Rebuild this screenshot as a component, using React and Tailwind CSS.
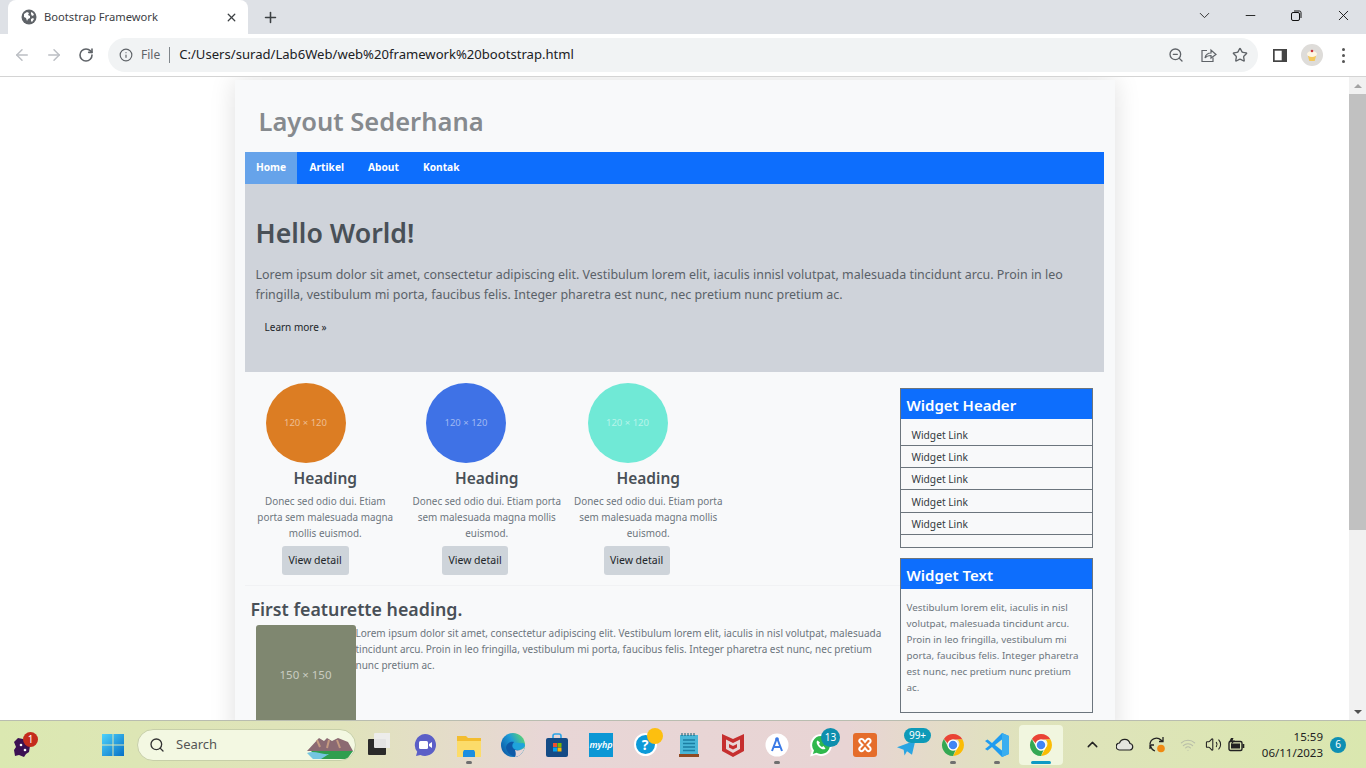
import React from "react";
import { ArrowLeft, ArrowRight, RotateCw, Info, ZoomOut, Star, ChevronDown, Minus, X, Plus, Search, ChevronUp, Volume2, Wifi } from "lucide-react";

const ChromeLogo = ({ size = 24 }) => (
  <svg width={size} height={size} viewBox="0 0 48 48">
    <path d="M24 2a22 22 0 0 1 19 11H24a11 11 0 0 0-10.500 7.500L5.800 11.800A22 22 0 0 1 24 2z" fill="#ea4335" />
    <path d="M43 13a22 22 0 0 1-19 33l9.500-16.500A11 11 0 0 0 33 13z" fill="#fbbc04" />
    <path d="M5.800 11.800 15 29.500A11 11 0 0 0 29 34l-5 12A22 22 0 0 1 5.800 11.800z" fill="#34a853" />
    <circle cx="24" cy="24" r="11" fill="#fff" />
    <circle cx="24" cy="24" r="8.500" fill="#4285f4" />
  </svg>
);

const Slot = ({ children, dot, active }) => (
  <div className={`relative flex h-[40px] w-[44px] shrink-0 items-center justify-center rounded ${active ? "bg-[#f1f6df]" : ""}`}>
    {children}
    {dot && <span className="absolute bottom-[1px] left-[19px] h-[3px] w-[6px] rounded-full bg-[#6f6f6f]" />}
    {active && <span className="absolute bottom-[1px] left-[12px] h-[3px] w-[20px] rounded-full bg-[#0e9ac4]" />}
  </div>
);

const Badge = ({ children, className }) => (
  <span className={`absolute flex items-center justify-center rounded-full text-[10px] text-white ${className}`}>{children}</span>
);

const Circle = ({ color, textColor, ml, btn, label }) => (
  <div className="w-[161.5px] shrink-0 text-center">
    <div className={`flex h-[80px] w-[80px] items-center justify-center rounded-full ${color} ${ml}`}>
      <span className={`text-[9.5px] ${textColor}`}>120 × 120</span>
    </div>
    <h2 className="mt-[4px] text-[15.5px] leading-[22px] font-semibold text-[#495057]">Heading</h2>
    <p className="mt-[4px] text-[9.9px] leading-[16px] whitespace-nowrap text-[#6c757d]">{label}</p>
    <button className={`mt-[5px] block h-[29px] rounded-[3px] bg-[#ced4da] text-[10.5px] text-[#212529] ${btn}`}>View detail</button>
  </div>
);

const Widget = ({ title, children, className }) => (
  <section className={`w-[193px] border border-[#6c757d] ${className}`}>
    <h3 className="flex h-[30px] items-center bg-[#0d6efd] pr-[5px] pl-[6px] pt-[2px] text-[15px] font-semibold text-white">{title}</h3>
    {children}
  </section>
);

const links = [27, 22, 22, 23, 22];

export default function App() {
  return (
    <div className="flex h-screen w-full flex-col overflow-hidden bg-white font-['Noto_Sans',sans-serif]">
      {/* tab strip */}
      <div className="flex h-[34px] shrink-0 items-end bg-[#dee1e6] pl-[8px]">
        <div className="flex h-[34px] w-[240px] items-center rounded-t-lg bg-white pl-[13px] pr-[10px]">
          <svg width="16" height="16" viewBox="0 0 16 16">
            <circle cx="8" cy="8" r="7.500" fill="#5f6368" />
            <path d="M3 5l3-2 2 1-1 2 2 1v2l-2 1-1 2-1-3-2-1zM10 3l2 1 1 2-2 1-1-2zM10 10l2-1 1 1-2 3-1-1z" fill="#fff" />
          </svg>
          <span className="ml-[7px] flex-1 text-[11.2px] text-[#3c4043]">Bootstrap Framework</span>
          <X size={13} strokeWidth={2.4} className="text-[#3c4043]" />
        </div>
        <div className="flex h-[34px] w-[44px] items-center justify-center">
          <Plus size={17} strokeWidth={2.2} className="text-[#3c4043]" />
        </div>
        <div className="flex-1" />
        <div className="flex h-[30px] items-center self-start pr-[8px]">
          <ChevronDown size={17} strokeWidth={1.4} className="mr-[30px] text-[#333]" />
          <Minus size={15} strokeWidth={1.4} className="mr-[33px] text-[#111]" />
          <svg width="11" height="11" viewBox="0 0 11 11" fill="none" stroke="#111" className="mr-[33px]">
            <rect x="0.500" y="2.500" width="8" height="8" rx="1.500" />
            <path d="M3 1h5.500A1.500 1.500 0 0 1 10 2.500V8" />
          </svg>
          <X size={17} strokeWidth={1.3} className="mr-[6px] text-[#111]" />
        </div>
      </div>
      {/* toolbar */}
      <div className="flex h-[43px] shrink-0 items-center border-b border-[#d4d4d4] bg-white pl-[13px]">
        <ArrowLeft size={18} className="text-[#bcbfc4]" />
        <ArrowRight size={18} className="ml-[14px] text-[#bcbfc4]" />
        <RotateCw size={16} strokeWidth={2.4} className="ml-[15px] text-[#5f6368]" />
        <div className="ml-[14px] flex h-[34px] w-[1150px] items-center rounded-full bg-[#f1f3f4] pl-[11px] pr-[8px]">
          <Info size={14} strokeWidth={2} className="text-[#5f6368]" />
          <span className="ml-[8px] text-[12px] text-[#5f6368]">File</span>
          <span className="ml-[9px] h-[16px] w-px bg-[#80868b]" />
          <span className="ml-[9px] flex-1 text-[13.100px] text-[#202124]">C:/Users/surad/Lab6Web/web%20framework%20bootstrap.html</span>
          <ZoomOut size={16} className="text-[#5f6368]" />
          <svg width="17" height="17" viewBox="0 0 17 17" fill="none" stroke="#5f6368" strokeWidth="1.200" className="ml-[16px]">
            <path d="M7 3.500H2v11h11v-4" />
            <path d="M5 11c.6-3.500 3-5 6-5V3l5 4.500L11 11V8.500c-2.400 0-4.500.6-6 2.500z" />
          </svg>
          <Star size={16} strokeWidth={2} className="ml-[15px] text-[#5f6368]" />
          <span className="w-[2px]" />
        </div>
        <svg width="14" height="13" viewBox="0 0 14 13" className="ml-[15px]">
          <rect width="14" height="13" fill="#444" />
          <rect x="1.700" y="1.700" width="7" height="9.600" fill="#fff" />
        </svg>
        <div className="ml-[14px] flex h-[22px] w-[22px] items-center justify-center rounded-full bg-[#dedcd9]">
          <svg width="14" height="14" viewBox="0 0 14 14">
            <path d="M3 8h8l-1.300 5H4.300z" fill="#f3c75b" />
            <ellipse cx="7" cy="6" rx="5" ry="3" fill="#fff6e3" />
            <circle cx="7" cy="3" r="1.300" fill="#c8323c" />
          </svg>
        </div>
        <div className="ml-[19px] flex flex-col gap-[3px]">
          <span className="h-[3px] w-[3px] rounded-full bg-[#555]" />
          <span className="h-[3px] w-[3px] rounded-full bg-[#555]" />
          <span className="h-[3px] w-[3px] rounded-full bg-[#555]" />
        </div>
      </div>
      {/* viewport */}
      <div className="flex min-h-0 flex-1">
        <main className="min-w-0 flex-1 overflow-hidden">
          <div className="mx-auto mt-[3px] w-[880px] bg-[#f8f9fa] px-[10px] shadow-[0_0_24px_rgba(0,0,0,0.13)]">
            <header className="flex h-[72px] items-center pt-[10px] pl-[14px]">
              <h1 className="text-[25.500px] font-semibold text-[#868a8e]">Layout Sederhana</h1>
            </header>
            <nav className="flex h-[32px] w-[859px] items-center bg-[#0d6efd] text-[10.200px] font-bold text-white">
              <a className="flex h-full w-[52px] items-center justify-center bg-[#66a3ea] pl-[1px]">Home</a>
              <a className="ml-[13px]">Artikel</a>
              <a className="ml-[24px]">About</a>
              <a className="ml-[24px]">Kontak</a>
            </nav>
            <section className="h-[188px] w-[859px] bg-[#cfd3da] px-[11px] pt-[31px]">
              <h2 className="text-[26.700px] leading-[36px] font-semibold text-[#495057]">Hello World!</h2>
              <p className="mt-[14px] text-[12.450px] leading-[20px] whitespace-nowrap text-[#5a6168]">
                Lorem ipsum dolor sit amet, consectetur adipiscing elit. Vestibulum lorem elit, iaculis innisl volutpat, malesuada tincidunt arcu. Proin in leo
                <br />
                fringilla, vestibulum mi porta, faucibus felis. Integer pharetra est nunc, nec pretium nunc pretium ac.
              </p>
              <a className="mt-[15px] ml-[9px] block text-[10px] text-[#212529]">Learn more »</a>
            </section>
            <div className="flex w-[859px]">
              <div className="w-[655px] shrink-0">
                <div className="flex pt-[11px]">
                  <Circle color="bg-[#dc7d23]" textColor="text-[#eebd91]" ml="ml-[21px]" btn="ml-[37px] w-[67px]" label={<>Donec sed odio dui. Etiam<br />porta sem malesuada magna<br />mollis euismod.</>} />
                  <Circle color="bg-[#3f72e6]" textColor="text-[#9fb9f2]" ml="ml-[20px]" btn="ml-[36px] w-[66px]" label={<>Donec sed odio dui. Etiam porta<br />sem malesuada magna mollis<br />euismod.</>} />
                  <Circle color="bg-[#70e9d6]" textColor="text-[#b7f4ea]" ml="ml-[20px]" btn="ml-[36px] w-[66px]" label={<>Donec sed odio dui. Etiam porta<br />sem malesuada magna mollis<br />euismod.</>} />
                </div>
                <hr className="mt-[10px] border-[#f1f2f4]" />
                <h2 className="mt-[11px] ml-[6px] text-[17.800px] leading-[24px] font-semibold text-[#495057]">First featurette heading.</h2>
                <div className="mt-[4px] flex">
                  <div className="ml-[11px] flex h-[100px] w-[100px] shrink-0 items-center justify-center rounded-[3px] bg-[#7f8770]">
                    <span className="text-[11.500px] text-[#c9ccc1]">150 × 150</span>
                  </div>
                  <p className="text-[10px] leading-[16px] whitespace-nowrap text-[#6c757d]">
                    Lorem ipsum dolor sit amet, consectetur adipiscing elit. Vestibulum lorem elit, iaculis in nisl volutpat, malesuada
                    <br />
                    tincidunt arcu. Proin in leo fringilla, vestibulum mi porta, faucibus felis. Integer pharetra est nunc, nec pretium
                    <br />
                    nunc pretium ac.
                  </p>
                </div>
                <div className="h-[20px]" />
              </div>
              <aside className="pt-[16px]">
                <Widget title="Widget Header" className="h-[160px]">
                  {links.map((h, i) => (
                    <div key={i} style={{ height: h }} className="flex items-end border-b border-[#6c757d] pb-[2px] pl-[11px] text-[10.200px] text-[#343a40]">
                      Widget Link
                    </div>
                  ))}
                </Widget>
                <Widget title="Widget Text" className="mt-[10px] h-[155px]">
                  <p className="px-[6px] pt-[11px] text-[9.800px] leading-[16px] whitespace-nowrap text-[#6c757d]">
                    Vestibulum lorem elit, iaculis in nisl
                    <br />
                    volutpat, malesuada tincidunt arcu.
                    <br />
                    Proin in leo fringilla, vestibulum mi
                    <br />
                    porta, faucibus felis. Integer pharetra
                    <br />
                    est nunc, nec pretium nunc pretium
                    <br />
                    ac.
                  </p>
                </Widget>
              </aside>
            </div>
          </div>
        </main>
        {/* scrollbar */}
        <div className="flex w-[17px] shrink-0 flex-col items-center bg-[#f1f1f1]">
          <div className="flex h-[17px] w-full items-center justify-center">
            <span className="h-0 w-0 border-x-[4px] border-b-[4px] border-x-transparent border-b-[#a3a3a3]" />
          </div>
          <div className="h-[436px] w-full bg-[#c1c1c1]" />
          <div className="flex-1" />
          <div className="flex h-[17px] w-full items-center justify-center">
            <span className="h-0 w-0 border-x-[4px] border-t-[4px] border-x-transparent border-t-[#505050]" />
          </div>
        </div>
      </div>
      {/* taskbar */}
      <footer className="relative flex h-[48px] shrink-0 items-center border-t border-[#b9bdb0] bg-[linear-gradient(90deg,#dbe8b1_0%,#e0e3bb_25%,#e8d6d6_40%,#e8d4d4_62%,#dfe3bc_75%,#dae7af_100%)]">
        <div className="relative ml-[12px] h-[26px] w-[24px]">
          <svg width="20" height="22" viewBox="0 0 20 22" className="absolute top-[4px] left-0">
            <path d="M6 2l5 1 3 4 4 3-1 6-3 2-2 3-5-2-4 1-1-6 2-3-2-5z" fill="#3c1053" />
            <circle cx="9" cy="9" r="1.300" fill="#fff" />
            <circle cx="13" cy="14" r="1.300" fill="#fff" />
          </svg>
          <Badge className="top-0 left-[11px] h-[15px] w-[15px] bg-[#c42b1c]">1</Badge>
        </div>
        <div className="ml-[55px] flex">
          <Slot>
            <svg width="24" height="24" viewBox="0 0 24 24">
              <defs>
                <linearGradient id="win" x1="0" y1="0" x2="1" y2="1">
                  <stop offset="0" stopColor="#4fd3fb" />
                  <stop offset="1" stopColor="#0670c6" />
                </linearGradient>
              </defs>
              <path d="M1 1h10.500v10.500H1zM12.500 1H23v10.500H12.500zM1 12.500h10.500V23H1zM12.500 12.500H23V23H12.500z" fill="url(#win)" />
            </svg>
          </Slot>
        </div>
        <div className="relative ml-[2px] flex h-[32px] w-[219px] items-center overflow-hidden rounded-full border border-[#c7cfa9] bg-[#f3f8e2]">
          <Search size={16} strokeWidth={2} className="ml-[11px] text-[#333]" />
          <span className="ml-[11px] text-[13px] text-[#555]">Search</span>
          <svg width="50" height="30" viewBox="0 0 50 30" className="absolute top-[1px] right-0">
            <path d="M2 20 14 7l5 3 3-3 5 3 6-3 10 4 5 9z" fill="#8b6a72" />
            <path d="M12 9l3 7M24 9l-2 8M32 9l3 8" stroke="#c59a80" strokeWidth="2" />
            <path d="M6 20h42l-6 8H14z" fill="#2f9e4f" />
            <path d="M2 22c8-3 14 2 22 1l-8 5H8z" fill="#74c6e0" />
          </svg>
        </div>
        <div className="flex">
          <Slot>
            <svg width="24" height="24" viewBox="0 0 24 24">
              <rect x="2" y="6" width="18" height="16" rx="1" fill="#2a2a2a" />
              <rect x="8" y="0" width="18" height="15" rx="1" fill="#ededed" opacity="0.950" />
            </svg>
          </Slot>
        </div>
        <div className="ml-[3px] flex">
          <Slot>
            <svg width="24" height="24" viewBox="0 0 24 24">
              <path d="M12 1a11 11 0 1 1-4.600 21L3 23l1.200-4.300A11 11 0 0 1 12 1z" fill="#5b5fc7" />
              <rect x="6" y="8" width="9" height="8" rx="1.500" fill="#fff" />
              <path d="M16 11l3-2v6l-3-2z" fill="#fff" />
            </svg>
          </Slot>
          <Slot dot>
            <svg width="24" height="24" viewBox="0 0 24 24">
              <path d="M0 3h9l2 2h13v19H0z" fill="#f3bd2f" />
              <path d="M0 8h24v16H0z" fill="#fcdc6a" />
              <path d="M7 17h10l1 2v5H6v-5z" fill="#1c8fe0" />
            </svg>
          </Slot>
          <Slot>
            <svg width="24" height="24" viewBox="0 0 24 24">
              <defs>
                <linearGradient id="edge" x1="0" y1="0.800" x2="1" y2="0.200">
                  <stop offset="0" stopColor="#0c59a4" />
                  <stop offset="0.550" stopColor="#1e9bd8" />
                  <stop offset="1" stopColor="#5ed86e" />
                </linearGradient>
              </defs>
              <circle cx="12" cy="12" r="12" fill="url(#edge)" />
              <path d="M24 14c-2 3-6 4-9 3-4-1-5-5-2-8-4-1-8 2-8 6 1 5 6 9 10 9 4-1 7-5 9-10z" fill="#0e5aa8" />
              <path d="M24 13c-3 3-7 4-10 3-3-1-3-5 0-6 3-.5 6 .5 8 0 1 0 2 1.500 2 3z" fill="#1fa3dc" />
              <path d="M14 24c3 0 8-3 10-10-3 3-7 4-10 3 1 3 1 5 0 7z" fill="#e5d5d5" />
            </svg>
          </Slot>
          <Slot>
            <svg width="24" height="24" viewBox="0 0 24 24">
              <path d="M8 6V3a2 2 0 0 1 2-2h4a2 2 0 0 1 2 2v3" fill="none" stroke="#2aa4e8" strokeWidth="1.600" />
              <rect x="1" y="5" width="22" height="19" rx="2" fill="#144b86" />
              <rect x="8" y="10" width="4" height="4" fill="#ef5030" />
              <rect x="12.500" y="10" width="4" height="4" fill="#7fba00" />
              <rect x="8" y="14.500" width="4" height="4" fill="#02a4ef" />
              <rect x="12.500" y="14.500" width="4" height="4" fill="#ffb900" />
            </svg>
          </Slot>
          <Slot>
            <div className="flex h-[24px] w-[24px] items-center justify-center bg-[#0b97d5] text-[9px] font-semibold text-white italic">myhp</div>
          </Slot>
          <Slot>
            <div className="relative">
              <div className="flex h-[23px] w-[23px] items-center justify-center rounded-full border-2 border-white bg-[#0d9ad8] text-[14px] font-bold text-white">?</div>
              <span className="absolute -top-[5px] -right-[6px] h-[16px] w-[16px] rounded-full bg-[#fdbf0f]" />
            </div>
          </Slot>
          <Slot>
            <svg width="20" height="24" viewBox="0 0 20 24">
              <rect x="1" y="2" width="18" height="19" fill="#49b7d8" />
              <path d="M3 0v3M6 0v3M9 0v3M12 0v3M15 0v3" stroke="#145a70" strokeWidth="1" />
              <path d="M4 7h12M4 10.500h12M4 14h12M4 17.500h12" stroke="#1b7ea3" strokeWidth="1.500" />
              <rect x="0" y="21" width="20" height="3" fill="#8f4b24" />
            </svg>
          </Slot>
          <Slot>
            <svg width="22" height="24" viewBox="0 0 22 24">
              <path d="M0 1l11 5 11-5v17l-11 6-11-6z" fill="#c62f2f" />
              <path d="M4 6.500 11 10l7-3.500v9.500l-7 4-7-4z" fill="#e8d6d6" />
              <path d="M7 11l4 2 4-2v3.500l-4 2-4-2z" fill="#c62f2f" />
            </svg>
          </Slot>
          <Slot dot>
            <svg width="24" height="24" viewBox="0 0 24 24">
              <circle cx="12" cy="12" r="11.500" fill="#fff" />
              <path d="M12 5 7 18M12 5l5 13M8.500 14h7" fill="none" stroke="#3b7ae6" strokeWidth="2" />
              <circle cx="12" cy="6" r="1.800" fill="#3b7ae6" />
            </svg>
          </Slot>
          <Slot>
            <div className="relative">
              <svg width="24" height="24" viewBox="0 0 24 24">
                <path d="M12 1a11 11 0 1 1-5 20.800L1 23.500l1.800-5.800A11 11 0 0 1 12 1z" fill="#fff" />
                <path d="M12 3a9 9 0 1 1-4.500 16.800L3.800 21l1.200-3.600A9 9 0 0 1 12 3z" fill="#2fb84c" />
                <path d="M8.500 7.500c-1.500 1-1 4 1.500 6.500s5 3 6.500 1.500l-2-2.500-1.500 1c-1-.5-2.500-2-3-3l1-1.500z" fill="#fff" />
              </svg>
              <Badge className="-top-[5px] -right-[7px] h-[19px] w-[19px] bg-[#0e8ead]">13</Badge>
            </div>
          </Slot>
          <Slot>
            <div className="flex h-[24px] w-[24px] items-center justify-center rounded-[3px] bg-[#e56d2b]">
              <svg width="18" height="18" viewBox="0 0 18 18" fill="none" stroke="#fff" strokeWidth="2">
                <path d="M6.500 9 4 6.500a2 2 0 1 1 3-3L9 6l2-2.500a2 2 0 1 1 3 3L11.500 9l2.500 2.500a2 2 0 1 1-3 3L9 12l-2 2.500a2 2 0 1 1-3-3z" />
              </svg>
            </div>
          </Slot>
          <Slot>
            <div className="relative">
              <svg width="20" height="18" viewBox="0 0 24 18" className="mt-[6px] -ml-[4px]">
                <path d="M0 8 22 0l-4 17-6-4-3 5-1-7z" fill="#2aa5e2" />
              </svg>
              <Badge className="-top-[5px] left-[3px] h-[15px] w-[27px] bg-[#0e9ab8]">99+</Badge>
            </div>
          </Slot>
          <Slot dot>
            <ChromeLogo />
          </Slot>
          <Slot dot>
            <svg width="24" height="24" viewBox="0 0 24 24">
              <path d="M17 0 7 10 2.500 6.500 0 8l5 4-5 4 2.500 1.500L7 14l10 10 7-3V3z" fill="#1f9cf0" />
              <path d="M17 6.500v11L10 12z" fill="#dfe6c0" />
              <path d="M17 0l7 3v18l-7 3z" fill="#38aef0" />
            </svg>
          </Slot>
          <Slot active>
            <ChromeLogo />
          </Slot>
        </div>
        <div className="ml-[21px] flex items-center">
          <ChevronUp size={17} strokeWidth={2} className="text-[#222]" />
          <svg width="18" height="13" viewBox="0 0 18 13" className="ml-[15px]">
            <path d="M4 12a3.500 3.500 0 0 1-.5-7A5.500 5.500 0 0 1 14 5.500 3.300 3.300 0 0 1 14 12z" fill="#e4e4df" stroke="#222" strokeWidth="1.200" />
          </svg>
          <svg width="18" height="18" viewBox="0 0 18 18" fill="none" className="ml-[14px]">
            <path d="M2 8a6.500 6.500 0 0 1 11-4l2 1.500M15 1v4.500h-4" stroke="#222" strokeWidth="1.300" />
            <path d="M2 13v-4h4M2 9l2 4a6 6 0 0 0 3 2" stroke="#222" strokeWidth="1.300" />
            <circle cx="13" cy="12.500" r="3.800" fill="#f08a12" />
          </svg>
          <Wifi size={16} strokeWidth={1.6} className="ml-[14px] text-[#b7bca8]" />
          <Volume2 size={17} strokeWidth={1.5} className="ml-[9px] text-[#222]" />
          <svg width="17" height="14" viewBox="0 0 17 14" className="ml-[6px]">
            <rect x="1" y="3.500" width="13" height="9" rx="1.500" fill="none" stroke="#222" strokeWidth="1.400" />
            <rect x="3" y="5.500" width="9" height="5" fill="#222" />
            <rect x="14.500" y="6" width="1.800" height="4" fill="#222" />
            <path d="M3 0 1 4h3L3 7l4-4.500H4.500L5.500 0z" fill="#222" />
          </svg>
        </div>
        <div className="ml-[6px] w-[72px] text-right text-[11.500px] leading-[16px] text-[#222]">
          <div>15:59</div>
          <div>06/11/2023</div>
        </div>
        <span className="ml-[7px] flex h-[16px] w-[16px] items-center justify-center rounded-full bg-[#0e8fb3] text-[10px] text-white">6</span>
      </footer>
    </div>
  );
}
